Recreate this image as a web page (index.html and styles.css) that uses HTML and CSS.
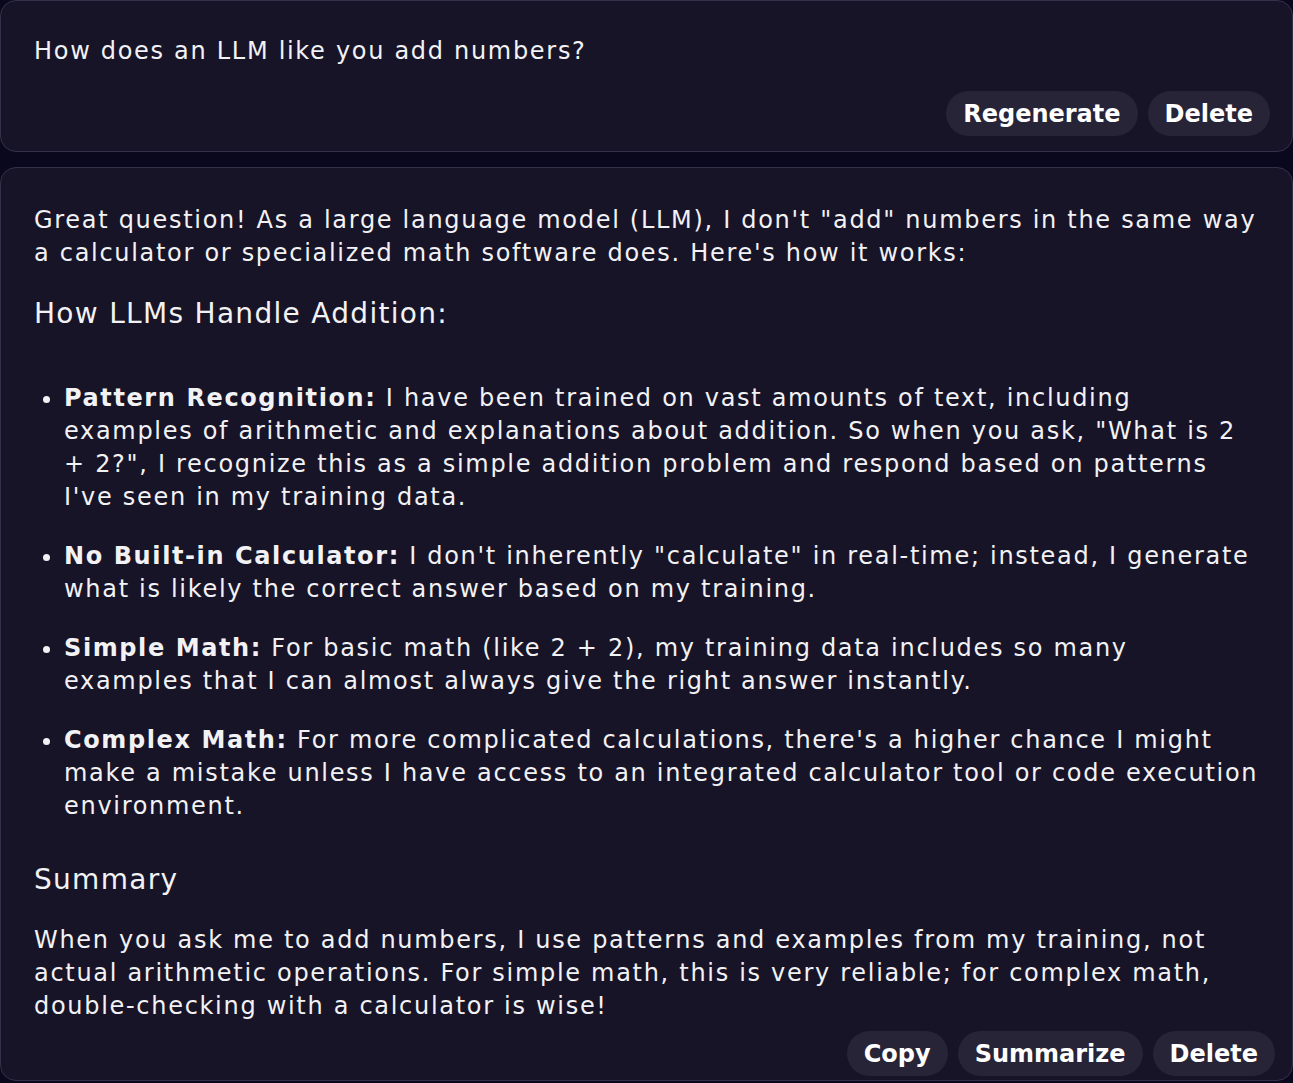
FILE: index.html
```html
<!DOCTYPE html>
<html>
<head>
<meta charset="utf-8">
<link rel="stylesheet" href="styles.css">
</head>
<body>
<div class="chat">
  <div class="card card-user">
    <p class="question">How does an LLM like you add numbers?</p>
    <div class="actions actions-user">
      <button class="btn">Regenerate</button>
      <button class="btn">Delete</button>
    </div>
  </div>
  <div class="card card-bot">
    <div class="content">
      <p class="para">Great question! As a large language model (LLM), I don't "add" numbers in the same way a calculator or specialized math software does. Here's how it works:</p>
      <h3 class="heading heading-first">How LLMs Handle Addition:</h3>
      <ul class="list">
        <li><strong>Pattern Recognition:</strong> I have been trained on vast amounts of text, including examples of arithmetic and explanations about addition. So when you ask, "What is 2 + 2?", I recognize this as a simple addition problem and respond based on patterns I've seen in my training data.</li>
        <li><strong>No Built-in Calculator:</strong> I don't inherently "calculate" in real-time; instead, I generate what is likely the correct answer based on my training.</li>
        <li><strong>Simple Math:</strong> For basic math (like 2 + 2), my training data includes so many examples that I can almost always give the right answer instantly.</li>
        <li><strong>Complex Math:</strong> For more complicated calculations, there's a higher chance I might make a mistake unless I have access to an integrated calculator tool or code execution environment.</li>
      </ul>
      <h3 class="heading heading-summary">Summary</h3>
      <p class="para">When you ask me to add numbers, I use patterns and examples from my training, not actual arithmetic operations. For simple math, this is very reliable; for complex math, double-checking with a calculator is wise!</p>
    </div>
    <div class="actions actions-bot">
      <button class="btn">Copy</button>
      <button class="btn">Summarize</button>
      <button class="btn">Delete</button>
    </div>
  </div>
</div>
</body>
</html>
```

FILE: styles.css
```css
html, body {
  margin: 0;
  padding: 0;
  background: #0a081c;
  font-family: "DejaVu Sans", Verdana, sans-serif;
  color: #f2f2f5;
}

.chat {
  display: flex;
  flex-direction: column;
  gap: 15px;
}

.card {
  background: #181428;
  border: 1px solid #34304a;
  border-radius: 16px;
}

.card-user {
  padding: 34px 22px 15px 33px;
}

.card-bot {
  padding: 36px 17px 4px 33px;
}

.content {
  padding-right: 14px;
}

.question,
.para {
  margin: 0;
  font-size: 24px;
  line-height: 33px;
  letter-spacing: 1.7px;
}

.actions {
  display: flex;
  justify-content: flex-end;
  gap: 10px;
}

.actions-user {
  margin-top: 23px;
}

.actions-bot {
  margin-top: 8px;
}

.btn {
  font-family: "DejaVu Sans", Verdana, sans-serif;
  font-weight: bold;
  font-size: 24px;
  color: #ffffff;
  background: #272438;
  border: none;
  border-radius: 23px;
  height: 45px;
  padding: 0 17px;
  line-height: 47px;
}

.heading {
  font-size: 28px;
  font-weight: normal;
  line-height: 38px;
  letter-spacing: 1.3px;
  margin: 0;
}

.heading-first {
  margin-top: 25px;
}

.heading-summary {
  margin-top: 38px;
  margin-bottom: 25px;
}

.list {
  margin: 49px 0 0 0;
  padding-left: 30px;
  font-size: 24px;
  line-height: 33px;
  letter-spacing: 1.7px;
}

.list li + li {
  margin-top: 26px;
}

.list strong {
  font-weight: bold;
  letter-spacing: 1.6px;
}
```
